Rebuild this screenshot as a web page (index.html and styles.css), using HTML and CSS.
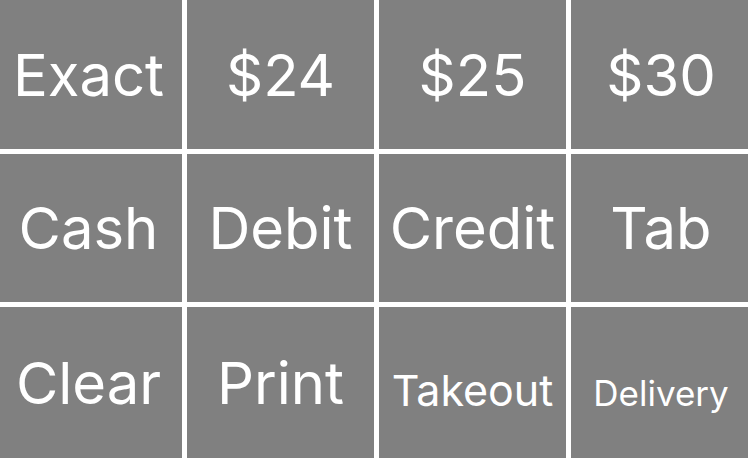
FILE: index.html
```html
<!DOCTYPE html>
<html>
<head>
<meta charset="utf-8">
<link rel="stylesheet" href="styles.css">
</head>
<body>
<div class="pad">
  <div class="key">Exact</div>
  <div class="key">$24</div>
  <div class="key">$25</div>
  <div class="key">$30</div>
  <div class="key">Cash</div>
  <div class="key">Debit</div>
  <div class="key">Credit</div>
  <div class="key">Tab</div>
  <div class="key">Clear</div>
  <div class="key">Print</div>
  <div class="key small">Takeout</div>
  <div class="key smaller">Delivery</div>
</div>
</body>
</html>
```
FILE: styles.css
```css
html, body {
  margin: 0;
  padding: 0;
  background: #ffffff;
  overflow: hidden;
}
.pad {
  display: grid;
  grid-template-columns: 187px 187px 187px 180px;
  grid-template-rows: 149px 148px 151px;
  gap: 5px;
  width: 756px;
  margin-left: -5px;
}
.key {
  background: #808080;
  color: #ffffff;
  display: flex;
  align-items: center;
  justify-content: center;
  font-family: Inter, "Noto Sans", sans-serif;
  font-size: 58px;
  font-weight: 400;
  letter-spacing: 0;
}
.key.small {
  font-size: 43px;
  padding-top: 14px;
}
.key.smaller {
  font-size: 35px;
  padding-top: 20px;
}
```
